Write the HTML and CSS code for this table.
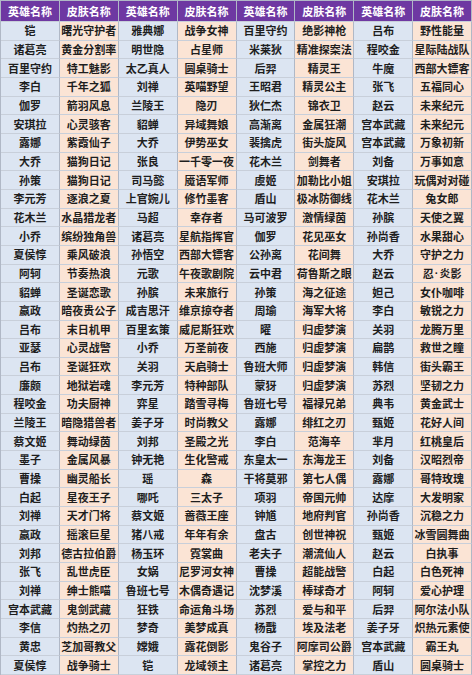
FILE: index.html
```html
<!DOCTYPE html>
<html lang="zh">
<head>
<meta charset="utf-8">
<link rel="stylesheet" href="styles.css">
</head>
<body>
<div class="sheet">
<div class="th">英雄名称</div><div class="th">皮肤名称</div><div class="th">英雄名称</div><div class="th">皮肤名称</div><div class="th">英雄名称</div><div class="th">皮肤名称</div><div class="th">英雄名称</div><div class="th">皮肤名称</div>
<div class="h">铠</div><div class="s">曙光守护者</div><div class="h">雅典娜</div><div class="s">战争女神</div><div class="h">百里守约</div><div class="s">绝影神枪</div><div class="h">吕布</div><div class="s">野性能量</div>
<div class="h">诸葛亮</div><div class="s">黄金分割率</div><div class="h">明世隐</div><div class="s">占星师</div><div class="h">米莱狄</div><div class="s">精准探案法</div><div class="h">程咬金</div><div class="s">星际陆战队</div>
<div class="h">百里守约</div><div class="s">特工魅影</div><div class="h">太乙真人</div><div class="s">圆桌骑士</div><div class="h">后羿</div><div class="s">精灵王</div><div class="h">牛魔</div><div class="s">西部大镖客</div>
<div class="h">李白</div><div class="s">千年之狐</div><div class="h">刘禅</div><div class="s">英喵野望</div><div class="h">王昭君</div><div class="s">精灵公主</div><div class="h">张飞</div><div class="s">五福同心</div>
<div class="h">伽罗</div><div class="s">箭羽风息</div><div class="h">兰陵王</div><div class="s">隐刃</div><div class="h">狄仁杰</div><div class="s">锦衣卫</div><div class="h">赵云</div><div class="s">未来纪元</div>
<div class="h">安琪拉</div><div class="s">心灵骇客</div><div class="h">貂蝉</div><div class="s">异域舞娘</div><div class="h">高渐离</div><div class="s">金属狂潮</div><div class="h">宫本武藏</div><div class="s">未来纪元</div>
<div class="h">露娜</div><div class="s">紫霞仙子</div><div class="h">大乔</div><div class="s">伊势巫女</div><div class="h">裴擒虎</div><div class="s">街头旋风</div><div class="h">宫本武藏</div><div class="s">万象初新</div>
<div class="h">大乔</div><div class="s">猫狗日记</div><div class="h">张良</div><div class="s">一千零一夜</div><div class="h">花木兰</div><div class="s">剑舞者</div><div class="h">刘备</div><div class="s">万事如意</div>
<div class="h">孙策</div><div class="s">猫狗日记</div><div class="h">司马懿</div><div class="s">魇语军师</div><div class="h">虞姬</div><div class="s">加勒比小姐</div><div class="h">安琪拉</div><div class="s">玩偶对对碰</div>
<div class="h">李元芳</div><div class="s">逐浪之夏</div><div class="h">上官婉儿</div><div class="s">修竹墨客</div><div class="h">盾山</div><div class="s">极冰防御线</div><div class="h">花木兰</div><div class="s">兔女郎</div>
<div class="h">花木兰</div><div class="s">水晶猎龙者</div><div class="h">马超</div><div class="s">幸存者</div><div class="h">马可波罗</div><div class="s">激情绿茵</div><div class="h">孙膑</div><div class="s">天使之翼</div>
<div class="h">小乔</div><div class="s">缤纷独角兽</div><div class="h">诸葛亮</div><div class="s">星航指挥官</div><div class="h">伽罗</div><div class="s">花见巫女</div><div class="h">孙尚香</div><div class="s">水果甜心</div>
<div class="h">夏侯惇</div><div class="s">乘风破浪</div><div class="h">孙悟空</div><div class="s">西部大镖客</div><div class="h">公孙离</div><div class="s">花间舞</div><div class="h">大乔</div><div class="s">守护之力</div>
<div class="h">阿轲</div><div class="s">节奏热浪</div><div class="h">元歌</div><div class="s">午夜歌剧院</div><div class="h">云中君</div><div class="s">荷鲁斯之眼</div><div class="h">赵云</div><div class="s">忍<span class="dot">·</span>炎影</div>
<div class="h">貂蝉</div><div class="s">圣诞恋歌</div><div class="h">孙膑</div><div class="s">未来旅行</div><div class="h">孙策</div><div class="s">海之征途</div><div class="h">妲己</div><div class="s">女仆咖啡</div>
<div class="h">嬴政</div><div class="s">暗夜贵公子</div><div class="h">成吉思汗</div><div class="s">维京掠夺者</div><div class="h">周瑜</div><div class="s">海军大将</div><div class="h">李白</div><div class="s">敏锐之力</div>
<div class="h">吕布</div><div class="s">末日机甲</div><div class="h">百里玄策</div><div class="s">威尼斯狂欢</div><div class="h">曜</div><div class="s">归虚梦演</div><div class="h">关羽</div><div class="s">龙腾万里</div>
<div class="h">亚瑟</div><div class="s">心灵战警</div><div class="h">小乔</div><div class="s">万圣前夜</div><div class="h">西施</div><div class="s">归虚梦演</div><div class="h">扁鹊</div><div class="s">救世之瞳</div>
<div class="h">吕布</div><div class="s">圣诞狂欢</div><div class="h">关羽</div><div class="s">天启骑士</div><div class="h">鲁班大师</div><div class="s">归虚梦演</div><div class="h">韩信</div><div class="s">街头霸王</div>
<div class="h">廉颇</div><div class="s">地狱岩魂</div><div class="h">李元芳</div><div class="s">特种部队</div><div class="h">蒙犽</div><div class="s">归虚梦演</div><div class="h">苏烈</div><div class="s">坚韧之力</div>
<div class="h">程咬金</div><div class="s">功夫厨神</div><div class="h">弈星</div><div class="s">踏雪寻梅</div><div class="h">鲁班七号</div><div class="s">福禄兄弟</div><div class="h">典韦</div><div class="s">黄金武士</div>
<div class="h">兰陵王</div><div class="s">暗隐猎兽者</div><div class="h">姜子牙</div><div class="s">时尚教父</div><div class="h">露娜</div><div class="s">绯红之刃</div><div class="h">甄姬</div><div class="s">花好人间</div>
<div class="h">蔡文姬</div><div class="s">舞动绿茵</div><div class="h">刘邦</div><div class="s">圣殿之光</div><div class="h">李白</div><div class="s">范海辛</div><div class="h">芈月</div><div class="s">红桃皇后</div>
<div class="h">墨子</div><div class="s">金属风暴</div><div class="h">钟无艳</div><div class="s">生化警戒</div><div class="h">东皇太一</div><div class="s">东海龙王</div><div class="h">刘备</div><div class="s">汉昭烈帝</div>
<div class="h">曹操</div><div class="s">幽灵船长</div><div class="h">瑶</div><div class="s">森</div><div class="h">干将莫邪</div><div class="s">第七人偶</div><div class="h">露娜</div><div class="s">哥特玫瑰</div>
<div class="h">白起</div><div class="s">星夜王子</div><div class="h">哪吒</div><div class="s">三太子</div><div class="h">项羽</div><div class="s">帝国元帅</div><div class="h">达摩</div><div class="s">大发明家</div>
<div class="h">刘禅</div><div class="s">天才门将</div><div class="h">蔡文姬</div><div class="s">蔷薇王座</div><div class="h">钟馗</div><div class="s">地府判官</div><div class="h">孙尚香</div><div class="s">沉稳之力</div>
<div class="h">嬴政</div><div class="s">摇滚巨星</div><div class="h">猪八戒</div><div class="s">年年有余</div><div class="h">盘古</div><div class="s">创世神祝</div><div class="h">甄姬</div><div class="s">冰雪圆舞曲</div>
<div class="h">刘邦</div><div class="s">德古拉伯爵</div><div class="h">杨玉环</div><div class="s">霓裳曲</div><div class="h">老夫子</div><div class="s">潮流仙人</div><div class="h">赵云</div><div class="s">白执事</div>
<div class="h">张飞</div><div class="s">乱世虎臣</div><div class="h">女娲</div><div class="s">尼罗河女神</div><div class="h">曹操</div><div class="s">超能战警</div><div class="h">白起</div><div class="s">白色死神</div>
<div class="h">刘禅</div><div class="s">绅士熊喵</div><div class="h">鲁班七号</div><div class="s">木偶奇遇记</div><div class="h">沈梦溪</div><div class="s">棒球奇才</div><div class="h">阿轲</div><div class="s">爱心护理</div>
<div class="h">宫本武藏</div><div class="s">鬼剑武藏</div><div class="h">狂铁</div><div class="s">命运角斗场</div><div class="h">苏烈</div><div class="s">爱与和平</div><div class="h">后羿</div><div class="s">阿尔法小队</div>
<div class="h">李信</div><div class="s">灼热之刃</div><div class="h">梦奇</div><div class="s">美梦成真</div><div class="h">杨戬</div><div class="s">埃及法老</div><div class="h">姜子牙</div><div class="s">炽热元素使</div>
<div class="h">黄忠</div><div class="s">芝加哥教父</div><div class="h">嫦娥</div><div class="s">露花倒影</div><div class="h">鬼谷子</div><div class="s">阿摩司公爵</div><div class="h">宫本武藏</div><div class="s">霸王丸</div>
<div class="h">夏侯惇</div><div class="s">战争骑士</div><div class="h">铠</div><div class="s">龙域领主</div><div class="h">诸葛亮</div><div class="s">掌控之力</div><div class="h">盾山</div><div class="s">圆桌骑士</div>
</div>
</body>
</html>
```

FILE: styles.css
```css
html, body {
  margin: 0;
  padding: 0;
  background: #ffffff;
}

.sheet {
  display: grid;
  grid-template-columns: repeat(8, 1fr);
  grid-template-rows: 21px repeat(35, 1fr);
  width: 472px;
  height: 675px;
  box-sizing: border-box;
  border-left: 1px solid #b0b8c6;
  border-top: 1px solid #b0b8c6;
  font-family: "Noto Sans CJK SC", "Noto Sans", sans-serif;
  font-weight: 700;
  font-size: 11px;
  color: #1e1e1e;
}

.sheet > div {
  display: flex;
  align-items: center;
  justify-content: center;
  border-right: 1px solid #b0b8c6;
  border-bottom: 1px solid #c8cfda;
  white-space: nowrap;
  overflow: hidden;
  line-height: 1;
}

.th {
  background: #6e38a2;
  color: #ffffff;
  font-size: 11px;
}

.h {
  background: #dce5f2;
}

.s {
  background: #fbe4d5;
}

.dot {
  font-family: "Liberation Sans", sans-serif;
  margin: 0 1px;
}
```
